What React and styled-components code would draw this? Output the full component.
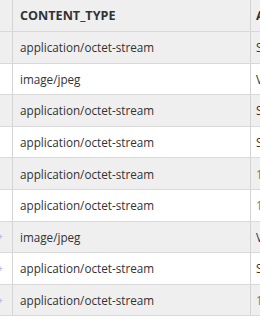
import styled, { createGlobalStyle } from "styled-components";

const Global = createGlobalStyle`
  html, body {
    margin: 0;
    padding: 0;
    background: #ffffff;
    overflow: hidden;
  }
  body {
    font-family: "Open Sans", "Noto Sans", "Liberation Sans", sans-serif;
  }
`;

const Grid = styled.div`
  width: 260px;
  overflow: hidden;
  border-top: 1px solid #dadada;
  margin-top: -1px;
`;

const Row = styled.div`
  display: grid;
  grid-template-columns: 13px 238px 30px;
  height: ${({ head }) => (head ? "32px" : "31.6px")};
  box-sizing: border-box;
  border-bottom: 1px solid #d9d9d9;
  background: ${({ shaded }) => (shaded ? "#efefef" : "#ffffff")};
`;

const Cell = styled.div`
  display: flex;
  align-items: center;
  box-sizing: border-box;
  border-right: 1px solid #d4d4d4;
  padding-left: ${({ pad }) => pad ?? 7}px;
  overflow: hidden;
  white-space: nowrap;
  font-size: ${({ head }) => (head ? "12.6px" : "11.7px")};
  font-weight: ${({ head }) => (head ? 700 : 400)};
  color: ${({ tone }) => tone || "#333333"};
`;

const Marker = styled.span`
  font-size: 9px;
  color: #9fb3cf;
  margin-left: -2px;
`;

const rows = [
  { type: "application/octet-stream", next: "S" },
  { type: "image/jpeg", next: "V" },
  { type: "application/octet-stream", next: "S" },
  { type: "application/octet-stream", next: "S" },
  { type: "application/octet-stream", next: "1", tone: "#8c7a2e" },
  { type: "application/octet-stream", next: "1", tone: "#8c7a2e" },
  { type: "image/jpeg", next: "V", mark: true },
  { type: "application/octet-stream", next: "S", mark: true },
  { type: "application/octet-stream", next: "1", tone: "#8c7a2e", mark: true },
];

export default function App() {
  return (
    <>
      <Global />
      <Grid>
        <Row head shaded>
          <Cell pad={0} />
          <Cell head>CONTENT_TYPE</Cell>
          <Cell head pad={5}>A</Cell>
        </Row>
        {rows.map((r, i) => (
          <Row key={i} shaded={i % 2 === 0}>
            <Cell pad={0}>{r.mark && <Marker>+</Marker>}</Cell>
            <Cell>{r.type}</Cell>
            <Cell pad={5} tone={r.tone}>{r.next}</Cell>
          </Row>
        ))}
      </Grid>
    </>
  );
}
